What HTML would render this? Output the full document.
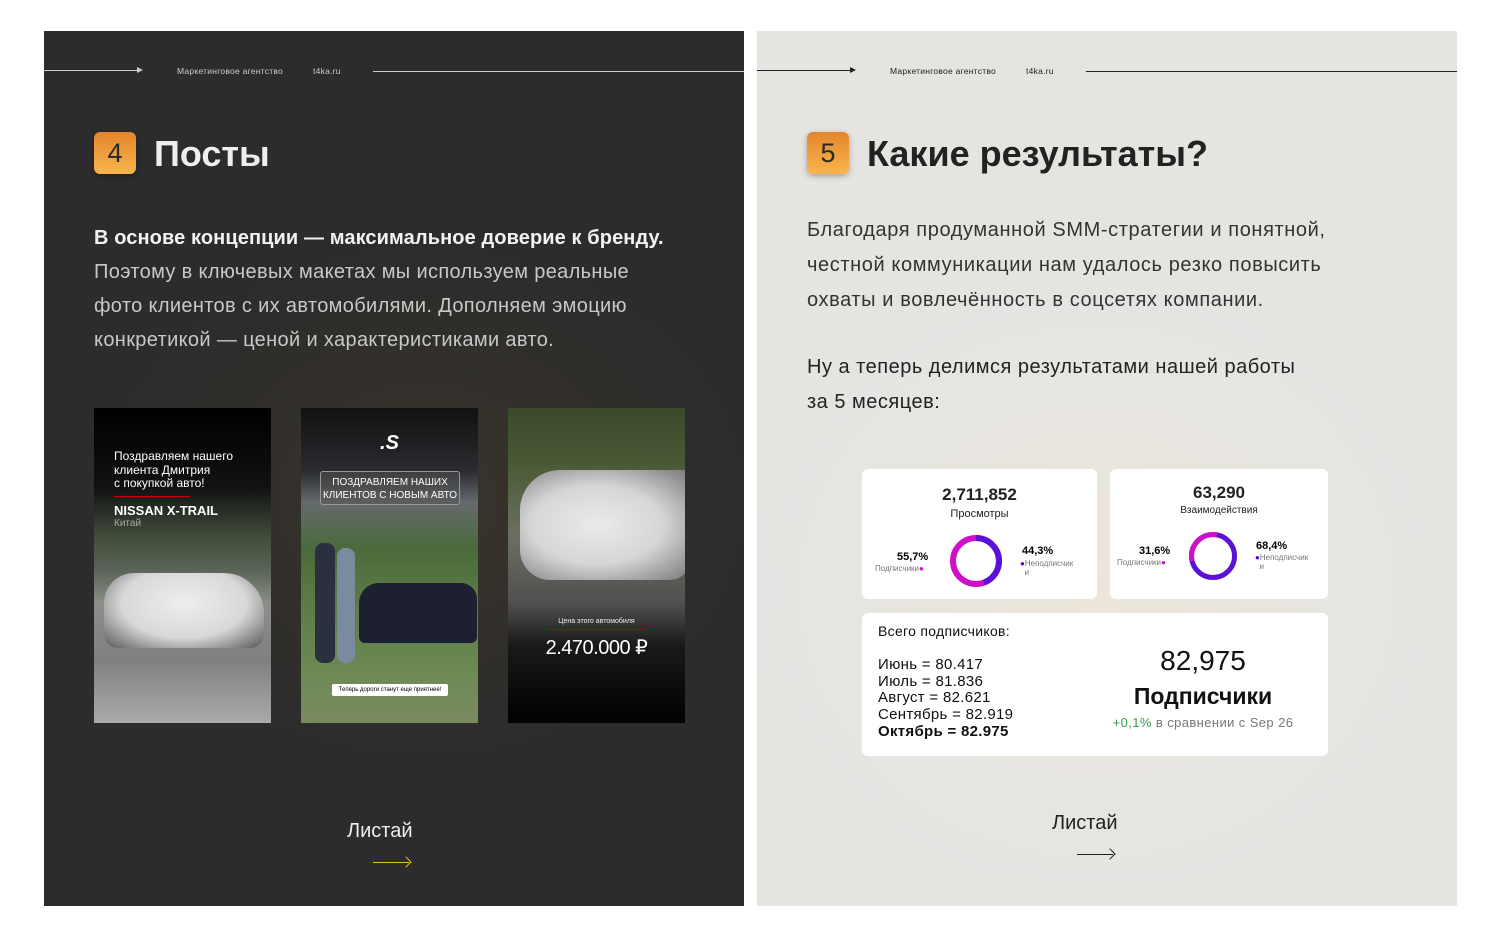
<!DOCTYPE html>
<html><head><meta charset="utf-8"><style>
*{margin:0;padding:0;box-sizing:border-box}
body{width:1500px;height:936px;background:#fff;position:relative;font-family:"Liberation Sans",sans-serif;overflow:hidden}
.p{position:absolute;top:31px;width:700px;height:875px;overflow:hidden}
#L{left:44px;background:radial-gradient(ellipse 380px 300px at 380px 470px,#3a342b 0%,#2e2d2b 70%,#2c2c2c 100%)}
#R{left:757px;background:radial-gradient(ellipse 380px 340px at 340px 560px,#ece6da 0%,#e6e5e2 70%,#e5e4e1 100%)}
.a{position:absolute}
.im{overflow:hidden}
.hd{font-size:8.5px;top:35px;letter-spacing:.25px}
.badge{position:absolute;width:42px;height:42px;border-radius:6px;background:linear-gradient(#e4852c,#f8b54d);color:#2a2a2a;font-size:27px;text-align:center;line-height:42px;box-shadow:0 2px 6px rgba(0,0,0,.3)}
.card{position:absolute;background:#fff;border-radius:6px}
.c{text-align:center;position:absolute;width:100%}
</style></head><body>
<div class="p" id="L">
 <div class="a" style="left:0;top:39px;width:96px;height:1px;background:#ccc"></div>
 <div class="a" style="left:93px;top:36px;border-left:6px solid #ccc;border-top:3px solid transparent;border-bottom:3px solid transparent"></div>
 <div class="a hd" style="left:133px;color:#ccc">Маркетинговое агентство</div>
 <div class="a hd" style="left:269px;color:#ccc">t4ka.ru</div>
 <div class="a" style="left:329px;top:40px;width:371px;height:1px;background:#ccc"></div>
 <div class="badge" style="left:50px;top:101px">4</div>
 <div class="a" style="left:110px;top:102px;font-size:36px;font-weight:bold;color:#eee">Посты</div>
 <div class="a" style="left:50px;top:190px;font-size:20px;line-height:34px;color:#c8c8c8;width:660px;letter-spacing:.35px"><b style="color:#f2f2f2;letter-spacing:.1px">В основе концепции — максимальное доверие к бренду.</b><br>Поэтому в ключевых макетах мы используем реальные<br>фото клиентов с их автомобилями. Дополняем эмоцию<br>конкретикой — ценой и характеристиками авто.</div>
 <div class="a im" style="left:50px;top:377px;width:177px;height:315px;background:linear-gradient(#000 0%,#111 25%,#3f4a3a 40%,#5c6658 52%,#8a8f88 62%,#7f8080 80%,#aaa 100%)">
  <div style="position:absolute;left:20px;top:42px;color:#fff;font-size:12px;line-height:13.5px">Поздравляем нашего<br>клиента Дмитрия<br>с покупкой авто!</div>
  <div style="position:absolute;left:20px;top:88px;width:76px;height:1px;background:#c00"></div>
  <div style="position:absolute;left:20px;top:95px;color:#fff;font-size:13px;font-weight:bold">NISSAN X-TRAIL</div>
  <div style="position:absolute;left:20px;top:110px;color:#aaa;font-size:10px">Китай</div>
  <div style="position:absolute;left:10px;top:165px;width:160px;height:75px;background:radial-gradient(ellipse at 50% 40%,#eee 0%,#d8d8d8 55%,#555 100%);border-radius:30px 40px 14px 14px"></div>
 </div>
 <div class="a im" style="left:257px;top:377px;width:177px;height:315px;background:linear-gradient(#111 0%,#2a2c30 20%,#666a6e 30%,#4a6a3a 45%,#5a7a45 60%,#6e8a55 85%,#7a8a60 100%)">
  <div style="position:absolute;left:0;width:100%;top:24px;text-align:center;color:#fff;font-size:20px;font-weight:bold;font-style:italic">.S</div>
  <div style="position:absolute;left:19px;top:63px;width:140px;height:34px;border:1px solid #999;background:rgba(80,80,80,.5);border-radius:3px;color:#fff;font-size:10px;text-align:center;line-height:13px;padding-top:4px">ПОЗДРАВЛЯЕМ НАШИХ<br>КЛИЕНТОВ С НОВЫМ АВТО</div>
  <div style="position:absolute;left:14px;top:135px;width:20px;height:120px;background:#2a3040;border-radius:8px"></div>
  <div style="position:absolute;left:36px;top:140px;width:18px;height:115px;background:#7a8ba0;border-radius:8px"></div>
  <div style="position:absolute;left:58px;top:175px;width:118px;height:60px;background:#1c2030;border-radius:20px 16px 6px 6px"></div>
  <div style="position:absolute;left:31px;top:276px;width:116px;height:12px;background:#fff;border-radius:2px;font-size:6px;text-align:center;line-height:12px">Теперь дороги станут еще приятнее!</div>
 </div>
 <div class="a im" style="left:464px;top:377px;width:177px;height:315px;background:linear-gradient(#3b4a2c 0%,#4a5a36 18%,#6a7060 40%,#505050 62%,#1a1a1a 75%,#000 100%)">
  <div style="position:absolute;left:12px;top:62px;width:170px;height:110px;background:radial-gradient(ellipse at 45% 50%,#eaeaea 0%,#d6d6d6 50%,#777 100%);border-radius:40px 0 20px 30px"></div>
  <div style="position:absolute;left:0;width:100%;top:210px;text-align:center;color:#eee;font-size:7px">Цена этого автомобиля</div>
  <div style="position:absolute;left:37px;top:221px;width:103px;height:1px;background:#a00"></div>
  <div style="position:absolute;left:0;width:100%;top:227px;text-align:center;color:#fff;font-size:20px;letter-spacing:-.5px">2.470.000 ₽</div>
 </div>
 <div class="a" style="left:303px;top:789px;font-size:20px;color:#eee">Листай</div>
 <div class="a" style="left:329px;top:831px;width:36px;height:1px;background:#e6c21a"></div>
 <div class="a" style="left:358px;top:827px;width:8px;height:8px;border-top:1px solid #e6c21a;border-right:1px solid #e6c21a;transform:rotate(45deg)"></div>
</div>
<div class="p" id="R">
 <div class="a" style="left:0;top:39px;width:96px;height:1px;background:#222"></div>
 <div class="a" style="left:93px;top:36px;border-left:6px solid #222;border-top:3px solid transparent;border-bottom:3px solid transparent"></div>
 <div class="a hd" style="left:133px;color:#222">Маркетинговое агентство</div>
 <div class="a hd" style="left:269px;color:#222">t4ka.ru</div>
 <div class="a" style="left:329px;top:40px;width:371px;height:1px;background:#222"></div>
 <div class="badge" style="left:50px;top:101px">5</div>
 <div class="a" style="left:110px;top:102px;font-size:36px;font-weight:bold;color:#222">Какие результаты?</div>
 <div class="a" style="left:50px;top:182px;font-size:20px;line-height:35px;color:#333;width:660px;letter-spacing:.6px">Благодаря продуманной SMM-стратегии и понятной,<br>честной коммуникации нам удалось резко повысить<br>охваты и вовлечённость в соцсетях компании.</div>
 <div class="a" style="left:50px;top:319px;font-size:20px;line-height:35px;color:#222;letter-spacing:.5px">Ну а теперь делимся результатами нашей работы<br>за 5 месяцев:</div>
 <div class="card" style="left:105px;top:438px;width:235px;height:130px">
  <div class="c" style="top:16px;font-size:17px;font-weight:bold;color:#222">2,711,852</div>
  <div class="c" style="top:39px;font-size:11px;color:#222">Просмотры</div>
  <svg class="a" style="left:86px;top:64px" width="56" height="56" viewBox="0 0 56 56"><circle cx="28" cy="28" r="23" fill="none" stroke="#cc10c8" stroke-width="6"/><circle cx="28" cy="28" r="23" fill="none" stroke="#5a12d8" stroke-width="6" stroke-dasharray="64 200" transform="rotate(-90 28 28)"/></svg>
  <div class="a" style="left:35px;top:82px;font-size:11px;font-weight:bold">55,7%</div>
  <div class="a" style="left:13px;top:95px;font-size:8px;color:#777">Подписчики<span style="color:#c1c">●</span></div>
  <div class="a" style="left:160px;top:76px;font-size:11px;font-weight:bold">44,3%</div>
  <div class="a" style="left:158px;top:90px;font-size:8px;color:#777;line-height:9px"><span style="color:#50c">●</span>Неподписчик<br>&nbsp;&nbsp;и</div>
 </div>
 <div class="card" style="left:353px;top:438px;width:218px;height:130px">
  <div class="c" style="top:14px;font-size:17px;font-weight:bold;color:#222">63,290</div>
  <div class="c" style="top:36px;font-size:10px;color:#222">Взаимодействия</div>
  <svg class="a" style="left:77px;top:61px" width="52" height="52" viewBox="0 0 52 52"><circle cx="26" cy="26" r="21.5" fill="none" stroke="#5a12d8" stroke-width="5"/><circle cx="26" cy="26" r="21.5" fill="none" stroke="#cc10c8" stroke-width="5" stroke-dasharray="43 200" transform="rotate(166 26 26)"/></svg>
  <div class="a" style="left:29px;top:76px;font-size:11px;font-weight:bold">31,6%</div>
  <div class="a" style="left:7px;top:89px;font-size:8px;color:#777">Подписчики<span style="color:#c1c">●</span></div>
  <div class="a" style="left:146px;top:71px;font-size:11px;font-weight:bold">68,4%</div>
  <div class="a" style="left:145px;top:84px;font-size:8px;color:#777;line-height:9px"><span style="color:#50c">●</span>Неподписчик<br>&nbsp;&nbsp;и</div>
 </div>
 <div class="card" style="left:105px;top:582px;width:466px;height:143px">
  <div class="a" style="left:16px;top:10px;font-size:14px;color:#111;letter-spacing:.3px">Всего подписчиков:</div>
  <div class="a" style="left:16px;top:44px;font-size:15px;line-height:16.7px;color:#111;letter-spacing:.3px">Июнь = 80.417<br>Июль = 81.836<br>Август = 82.621<br>Сентябрь = 82.919<br><b>Октябрь = 82.975</b></div>
  <div class="a" style="left:236px;width:210px;text-align:center;top:32px;font-size:28px;color:#111">82,975</div>
  <div class="a" style="left:236px;width:210px;text-align:center;top:70px;font-size:23px;font-weight:bold;color:#111">Подписчики</div>
  <div class="a" style="left:236px;width:210px;text-align:center;top:102px;font-size:13px;color:#777;letter-spacing:.4px"><span style="color:#3a9a50">+0,1%</span> в сравнении с Sep 26</div>
 </div>
 <div class="a" style="left:295px;top:781px;font-size:20px;color:#222">Листай</div>
 <div class="a" style="left:320px;top:823px;width:36px;height:1px;background:#222"></div>
 <div class="a" style="left:349px;top:819px;width:8px;height:8px;border-top:1px solid #222;border-right:1px solid #222;transform:rotate(45deg)"></div>
</div>
</body></html>
